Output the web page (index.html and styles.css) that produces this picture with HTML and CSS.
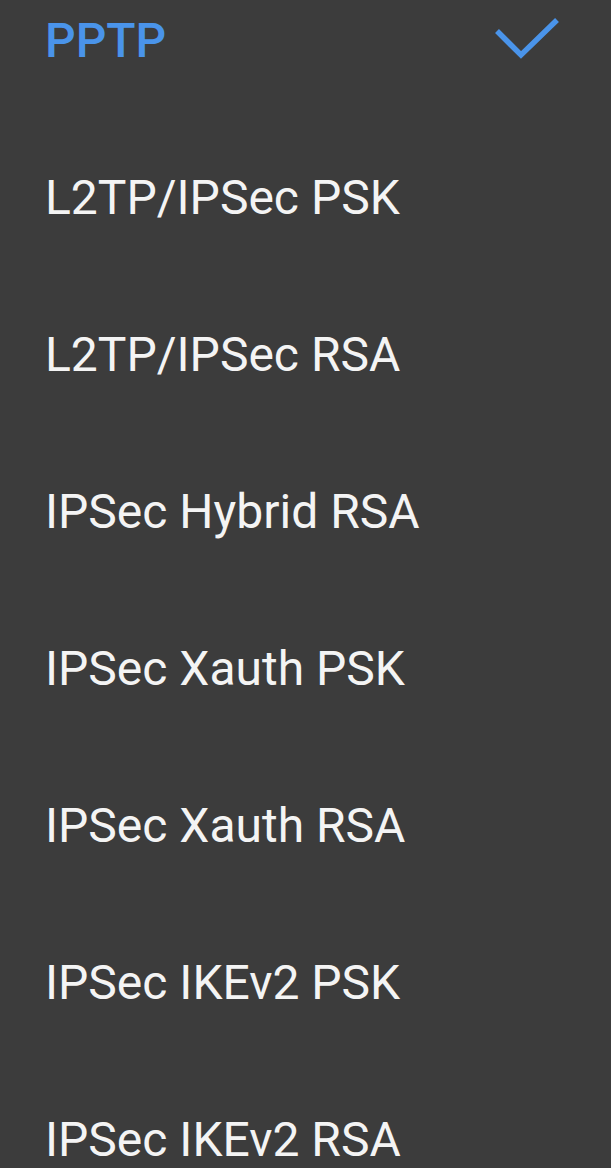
FILE: index.html
```html
<!DOCTYPE html>
<html lang="en">
<head>
    <meta charset="UTF-8">
    <meta name="viewport" content="width=device-width, initial-scale=1.0">
    <title>VPN Type</title>
    <link rel="stylesheet" href="styles.css">
</head>
<body>
<ul class="options">
    <li class="option selected">
        <span>PPTP</span>
        <svg class="check" width="70" height="50" viewBox="0 0 70 50">
            <polyline points="4,16 28,40 64,5" fill="none" stroke="currentColor" stroke-width="5.5"/>
        </svg>
    </li>
    <li class="option"><span>L2TP/IPSec PSK</span></li>
    <li class="option"><span>L2TP/IPSec RSA</span></li>
    <li class="option"><span>IPSec Hybrid RSA</span></li>
    <li class="option"><span>IPSec Xauth PSK</span></li>
    <li class="option"><span>IPSec Xauth RSA</span></li>
    <li class="option"><span>IPSec IKEv2 PSK</span></li>
    <li class="option"><span>IPSec IKEv2 RSA</span></li>
</ul>
</body>
</html>
```

FILE: styles.css
```css
body {
    font-family: Roboto, "Noto Sans", sans-serif;
    background-color: #3c3c3c;
    margin: 0;
    overflow: hidden;
}
.options {
    list-style: none;
    margin: -38px 0 0 0; /* list is scrolled a little */
    padding: 0;
}
.option {
    display: flex;
    align-items: center;
    justify-content: space-between;
    height: 157px;
    padding: 0 48px 0 45px;
    font-size: 48px;
    color: #f4f4f4;
}
.selected {
    color: #4a94ea;
    font-weight: 500;
}
.check {
    display: block;
    margin-top: -1px;
}
```
